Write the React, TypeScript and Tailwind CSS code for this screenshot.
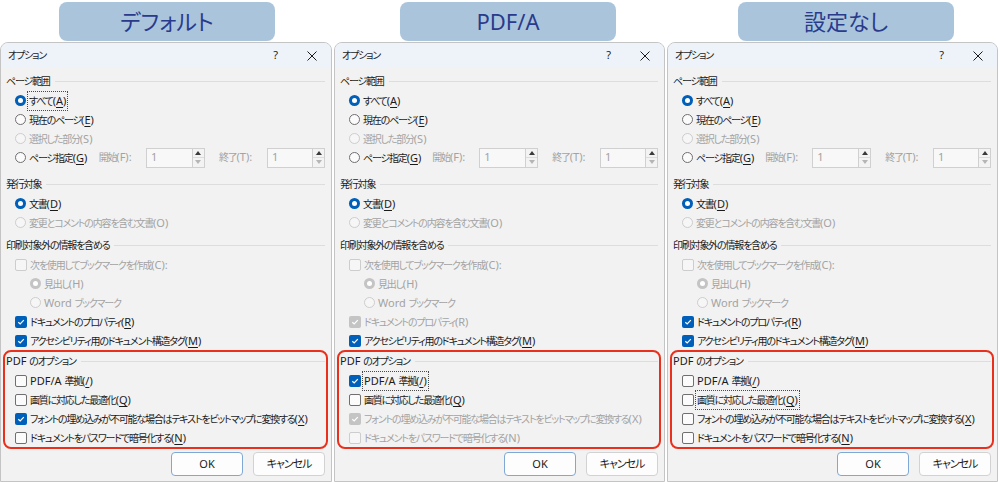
import type { ReactNode } from 'react';

type Variant = 'default' | 'pdfa' | 'none';

const FONT = "font-['Noto_Sans','Noto_Sans_CJK_JP',sans-serif] [font-feature-settings:'palt']";

// Latin runs keep normal spacing, Japanese runs are packed tighter (narrow UI font look)
function Txt({ s }: { s: string }) {
    return (
        <>
            {s
                .split(/([\x20-\x7e]+)/)
                .filter(Boolean)
                .map((p, i) =>
                    /^[\x20-\x7e]+$/.test(p) ? (
                        <span key={i} className="tracking-normal text-[11px]">
                            {p}
                        </span>
                    ) : (
                        <span key={i}>{p}</span>
                    )
                )}
        </>
    );
}

function Radio({ checked, disabled }: { checked?: boolean; disabled?: boolean }) {
    if (checked) {
        return (
            <span className={`w-[11px] h-[11px] rounded-full shrink-0 flex items-center justify-center ${disabled ? 'bg-[#c4c4c4]' : 'bg-[#005fb8]'}`}>
                <span className="w-[5px] h-[5px] rounded-full bg-white" />
            </span>
        );
    }
    return (
        <span className={`w-[11px] h-[11px] rounded-full shrink-0 border ${disabled ? 'border-[#cdcdcd] bg-[#f6f6f6]' : 'border-[#6f6f6f] bg-[#fbfbfb]'}`} />
    );
}

function Check({ checked, disabled }: { checked?: boolean; disabled?: boolean }) {
    if (checked) {
        return (
            <span className={`w-[12px] h-[12px] rounded-[2px] shrink-0 flex items-center justify-center ${disabled ? 'bg-[#c4c4c4]' : 'bg-[#005fb8]'}`}>
                <svg width="10" height="10" viewBox="0 0 10 10">
                    <path d="M2.3 5.2 L4.2 7 L7.8 3.2" fill="none" stroke="white" strokeWidth="1.2" />
                </svg>
            </span>
        );
    }
    return (
        <span className={`w-[12px] h-[12px] rounded-[2px] shrink-0 border ${disabled ? 'border-[#cdcdcd] bg-[#f6f6f6]' : 'border-[#6f6f6f] bg-[#fbfbfb]'}`} />
    );
}

interface LabelProps {
    text: string;
    k?: string;
    suffix?: string;
    disabled?: boolean;
    focus?: boolean;
}

function Label({ text, k, suffix, disabled, focus }: LabelProps) {
    return (
        <span
            className={`whitespace-nowrap leading-[15px] ${disabled ? 'text-[#a3a3a3]' : 'text-[#1b1b1b]'} ${focus ? 'outline-1 outline-dotted outline-[#4a4a4a] outline-offset-[1px]' : ''}`}
        >
            <Txt s={text} />
            {k && (
                <span className="tracking-normal text-[11px]">
                    (<span className={disabled ? '' : 'underline underline-offset-[2px]'}>{k}</span>){suffix}
                </span>
            )}
        </span>
    );
}

function Row({ control, indent, children }: { control: ReactNode; indent?: boolean; children: ReactNode }) {
    return (
        <div className={`h-[19px] flex items-center gap-[3px] ${indent ? 'pl-[24px]' : 'pl-[9px]'}`}>
            {control}
            {children}
        </div>
    );
}

function Group({ title }: { title: string }) {
    return (
        <div className="h-[19px] flex items-center gap-[5px] text-[#1b1b1b]">
            <span className="whitespace-nowrap">
                <Txt s={title} />
            </span>
            <div className="flex-1 h-px bg-[#dddddd]" />
        </div>
    );
}

function Spin({ width }: { width: string }) {
    return (
        <div className="flex h-[20px] tracking-normal text-[11px]">
            <div className={`${width} border border-[#d0d0d0] bg-[#f8f8f8] text-[#a3a3a3] pl-[4px] flex items-center`}>1</div>
            <div className="w-[12px] border border-l-0 border-[#d0d0d0] bg-[#f3f3f3] flex flex-col">
                <div className="flex-1 flex items-center justify-center border-b border-[#dcdcdc]">
                    <svg width="6" height="4" viewBox="0 0 6 4">
                        <path d="M0 4 L3 0 L6 4 Z" fill="#3a3a3a" />
                    </svg>
                </div>
                <div className="flex-1 flex items-center justify-center">
                    <svg width="6" height="4" viewBox="0 0 6 4">
                        <path d="M0 0 L3 4 L6 0 Z" fill="#b5b5b5" />
                    </svg>
                </div>
            </div>
        </div>
    );
}

function Dialog({ variant, width }: { variant: Variant; width: string }) {
    const pdfa = variant === 'pdfa';
    return (
        <div className={`${width} h-[440px] shrink-0 bg-[#f2f2f2] border border-[#c4c4c4] rounded-t-[8px] overflow-hidden text-[10px] tracking-[-1.2px]`}>
            <div className="h-[25px] bg-[#eef3f9] flex items-center pl-[7px] pr-[14px] text-[#1b1b1b]">
                <span className="flex-1">オプション</span>
                <span className="mr-[29px] tracking-normal text-[11px]">?</span>
                <svg width="10" height="10" viewBox="0 0 10 10">
                    <path d="M0.5 0.5 L9.5 9.5 M9.5 0.5 L0.5 9.5" stroke="#1b1b1b" strokeWidth="1" />
                </svg>
            </div>
            <div className="pl-[5px] pr-[6px] pt-[4px]">
                <Group title="ページ範囲" />
                <Row control={<Radio checked />}>
                    <Label text="すべて" k="A" focus={variant === 'default'} />
                </Row>
                <Row control={<Radio />}>
                    <Label text="現在のページ" k="E" />
                </Row>
                <Row control={<Radio disabled />}>
                    <Label text="選択した部分" k="S" disabled />
                </Row>
                <Row control={<Radio />}>
                    <div className="w-[71px]">
                        <Label text="ページ指定" k="G" />
                    </div>
                    <span className="w-[47px] text-[#a3a3a3] whitespace-nowrap">
                        <Txt s="開始(F):" />
                    </span>
                    <Spin width="w-[47px]" />
                    <span className="ml-[11px] w-[48px] text-[#a3a3a3] whitespace-nowrap">
                        <Txt s="終了(T):" />
                    </span>
                    <Spin width="w-[46px]" />
                </Row>

                <div className="mt-[8px]">
                    <Group title="発行対象" />
                </div>
                <Row control={<Radio checked />}>
                    <Label text="文書" k="D" />
                </Row>
                <Row control={<Radio disabled />}>
                    <Label text="変更とコメントの内容を含む文書" k="O" disabled />
                </Row>

                <div className="mt-[4px]">
                    <Group title="印刷対象外の情報を含める" />
                </div>
                <Row control={<Check disabled />}>
                    <Label text="次を使用してブックマークを作成" k="C" suffix=":" disabled />
                </Row>
                <Row indent control={<Radio checked disabled />}>
                    <Label text="見出し" k="H" disabled />
                </Row>
                <Row indent control={<Radio disabled />}>
                    <Label text="Word ブックマーク" disabled />
                </Row>
                <Row control={<Check checked disabled={pdfa} />}>
                    <Label text="ドキュメントのプロパティ" k="R" disabled={pdfa} />
                </Row>
                <Row control={<Check checked />}>
                    <Label text="アクセシビリティ用のドキュメント構造タグ" k="M" />
                </Row>

                {/* annotation box around the PDF options */}
                <div className="ml-[-3px] mr-[-3px] border-2 border-[#e8301c] rounded-[8px] px-[1px]">
                    <Group title="PDF のオプション" />
                    <Row control={<Check checked={pdfa} />}>
                        <Label text="PDF/A 準拠" k="/" focus={pdfa} />
                    </Row>
                    <Row control={<Check />}>
                        <Label text="画質に対応した最適化" k="Q" focus={variant === 'none'} />
                    </Row>
                    <Row control={<Check checked={variant !== 'none'} disabled={pdfa} />}>
                        <Label text="フォントの埋め込みが不可能な場合はテキストをビットマップに変換する" k="X" disabled={pdfa} />
                    </Row>
                    <Row control={<Check disabled={pdfa} />}>
                        <Label text="ドキュメントをパスワードで暗号化する" k="N" disabled={pdfa} />
                    </Row>
                </div>

                <div className="mt-[3px] flex justify-end gap-[10px] tracking-normal text-[11px]">
                    <button className="w-[72px] h-[24px] rounded-[4px] border border-[#7fa8d4] bg-[#fdfdfd] text-[#1b1b1b]">
                        OK
                    </button>
                    <button className="w-[72px] h-[24px] rounded-[4px] border border-[#d2d2d2] bg-[#fdfdfd] text-[#1b1b1b] tracking-[-1px]">
                        キャンセル
                    </button>
                </div>
            </div>
        </div>
    );
}

function Tag({ children, className }: { children: ReactNode; className: string }) {
    return (
        <div className={`${className} w-[216px] h-[39px] rounded-[8px] bg-[#aac5db] text-[#2a3b8c] text-[22px] flex items-center justify-center`}>
            {children}
        </div>
    );
}

export default function App() {
    return (
        <div className={`w-[1000px] h-[482px] overflow-hidden bg-white ${FONT}`}>
            <div className="h-[42px] pt-[2px] flex">
                <Tag className="ml-[59px]">デフォルト</Tag>
                <Tag className="ml-[125px]">PDF/A</Tag>
                <Tag className="ml-[122px]">設定なし</Tag>
            </div>
            <div className="flex gap-[2px]">
                <Dialog variant="default" width="w-[332px]" />
                <Dialog variant="pdfa" width="w-[331px]" />
                <Dialog variant="none" width="w-[331px]" />
            </div>
        </div>
    );
}
